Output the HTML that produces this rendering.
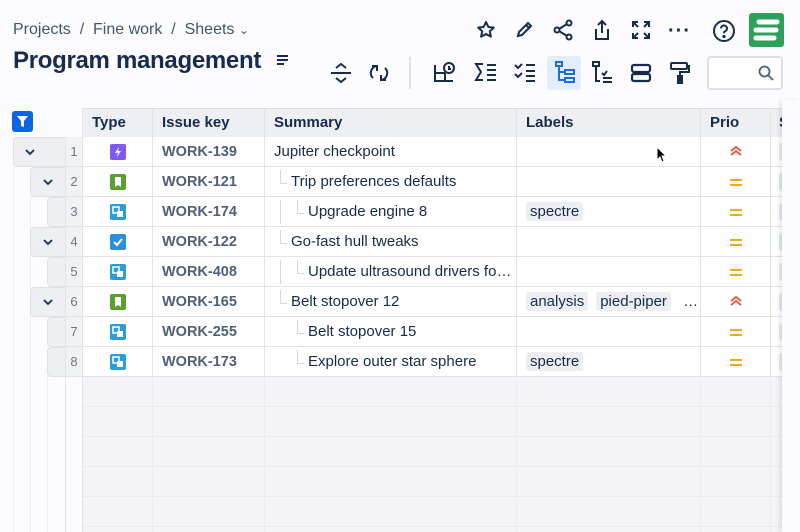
<!DOCTYPE html>
<html><head><meta charset="utf-8"><style>
*{box-sizing:border-box;margin:0;padding:0}
body{width:800px;height:532px;overflow:hidden;background:#fcfcfe;font-family:"Liberation Sans",sans-serif;color:#172b4d;position:relative}
.abs{position:absolute}
.crumb{left:13px;top:21px;font-size:16px;color:#44546f}
h1{position:absolute;left:13px;top:47px;font-size:24px;font-weight:bold;color:#172b4d;letter-spacing:-0.3px}
.ic{position:absolute}
.grid{position:absolute;left:82px;top:108px;width:702px}
.row{position:absolute;left:0;height:30px;border-bottom:1px solid #e2e3e7;background:#fff;width:702px}
.c{position:absolute;top:0;height:30px;line-height:30px;font-size:15px;border-left:1px solid #e2e3e7;white-space:nowrap;overflow:hidden}
.hdr{background:#eeeff2;font-weight:bold;color:#172b4d;border-top:1px solid #dcdde1}
.key{color:#505f79;font-weight:bold;padding-left:9px;font-size:14.5px}
.tag{display:inline-block;background:#eceef1;border-radius:3px;padding:0 4px;line-height:19px;font-size:15px;color:#172b4d;margin-left:8px}
.exp{position:absolute;height:30px;background:#eeeff2;border:1px solid #dfe1e5;border-right:none;border-radius:4px 0 0 4px}
.num{position:absolute;left:65px;width:17px;height:30px;line-height:30px;text-align:center;font-size:13px;color:#6b778c;background:#f1f2f4;border-bottom:1px solid #e2e3e7;border-left:1px solid #e2e3e7}
.tline{position:absolute;border-left:1px solid #d4d6db}
</style></head><body>
<div class="abs crumb">Projects&nbsp;&nbsp;/&nbsp;&nbsp;Fine work&nbsp;&nbsp;/&nbsp;&nbsp;Sheets <span style="font-size:12px">&#8964;</span></div>
<h1>Program management</h1>
<svg class="ic" style="left:276px;top:54px" width="14" height="12"><path d="M1 2h11M1 6h11M1 10h7" stroke="#172b4d" stroke-width="2"/></svg>
<svg class="ic" style="left:476px;top:20px" width="20" height="20" fill="none" stroke="#172b4d" stroke-width="2" stroke-linejoin="round"><path d="M10 2l2.4 5 5.4.6-4 3.7 1.1 5.3L10 14l-4.9 2.6 1.1-5.3-4-3.7 5.4-.6z"/></svg>
<svg class="ic" style="left:514px;top:20px" width="20" height="20" fill="none" stroke="#172b4d" stroke-width="2"><path d="M4 16l1-4 9-9 3 3-9 9z M12 5l3 3"/></svg>
<svg class="ic" style="left:552px;top:19px" width="22" height="22" fill="none" stroke="#172b4d" stroke-width="2"><circle cx="5" cy="11" r="2.5"/><circle cx="17" cy="4" r="2.5"/><circle cx="17" cy="18" r="2.5"/><path d="M7 10l8-5M7 12l8 5"/></svg>
<svg class="ic" style="left:592px;top:19px" width="20" height="22" fill="none" stroke="#172b4d" stroke-width="2"><path d="M10 14V2M6 6l4-4 4 4M4 10v10h12V10"/></svg>
<svg class="ic" style="left:631px;top:20px" width="20" height="20" fill="none" stroke="#172b4d" stroke-width="2"><path d="M2 7V2h5M13 2h5v5M18 13v5h-5M7 18H2v-5M3 3l4 4M17 3l-4 4M17 17l-4-4M3 17l4-4"/></svg>
<div class="abs" style="left:668px;top:23px;font-size:20px;font-weight:bold;letter-spacing:1px;line-height:16px">&middot;&middot;&middot;</div>
<svg class="ic" style="left:712px;top:19px" width="24" height="24" fill="none" stroke="#172b4d" stroke-width="2"><circle cx="12" cy="12" r="10"/><path d="M9 9.5a3 3 0 1 1 4 2.8c-.8.4-1 1-1 2"/><circle cx="12" cy="17.5" r=".6" fill="#172b4d"/></svg>
<div class="abs" style="left:749px;top:13px;width:35px;height:34px;background:#2fa05c;border-radius:3px"></div>
<svg class="ic" style="left:751px;top:16px" width="31" height="28"><path d="M8 6h18M5 14h20M5 22h18" stroke="#fff" stroke-width="5" stroke-linecap="round"/></svg>
<svg class="ic" style="left:330px;top:62px" width="22" height="22" fill="none" stroke="#172b4d" stroke-width="2"><path d="M1 11h20M6 6l5-4 5 4M6 16l5 4 5-4"/></svg>
<svg class="ic" style="left:369px;top:62px" width="20" height="22" fill="none" stroke="#172b4d" stroke-width="2"><path d="M8 4a7 7 0 0 0-4 12M12 18a7 7 0 0 0 4-12M3 4h5v5M17 18h-5v-5"/></svg>
<div class="abs" style="left:409px;top:57px;width:2px;height:32px;background:#e0e1e5"></div>
<svg class="ic" style="left:433px;top:61px" width="24" height="22" fill="none" stroke="#172b4d" stroke-width="2"><path d="M2 4v16h18M2 12h10M12 12v8"/><circle cx="16" cy="7" r="5"/><path d="M16 5v3h2"/></svg>
<svg class="ic" style="left:474px;top:62px" width="24" height="20" fill="none" stroke="#172b4d" stroke-width="2"><path d="M9 2H2l5 8-5 8h7M13 3h9M13 8h9M13 13h9M13 18h9"/></svg>
<svg class="ic" style="left:513px;top:62px" width="24" height="20" fill="none" stroke="#172b4d" stroke-width="2"><path d="M2 3l3 3 4-4M2 12l3 3 4-4M13 3h9M13 9h9M13 14h9M13 19h9"/></svg>
<div class="abs" style="left:547px;top:56px;width:34px;height:34px;background:#e3edfc;border-radius:3px"></div>
<svg class="ic" style="left:554px;top:61px" width="22" height="24" fill="none" stroke="#1d6ce0" stroke-width="2"><rect x="2" y="1" width="6" height="4"/><path d="M5 5v14h5M5 11h5"/><rect x="11" y="9" width="9" height="4"/><rect x="11" y="17" width="9" height="4"/></svg>
<svg class="ic" style="left:591px;top:61px" width="22" height="24" fill="none" stroke="#172b4d" stroke-width="2"><rect x="2" y="1" width="6" height="4"/><path d="M5 5v15h4M11 12l2 2 3-4M12 17h9M12 21h9"/></svg>
<svg class="ic" style="left:630px;top:63px" width="22" height="20" fill="none" stroke="#172b4d" stroke-width="2.2"><rect x="2" y="2" width="18" height="7" rx="2"/><rect x="2" y="11" width="18" height="7" rx="2"/></svg>
<svg class="ic" style="left:669px;top:61px" width="22" height="24" fill="none" stroke="#172b4d" stroke-width="2"><rect x="2" y="2" width="16" height="6" rx="1"/><path d="M18 5h2v6h-9v4"/><rect x="9" y="15" width="4" height="7" fill="#172b4d"/></svg>
<div class="abs" style="left:707px;top:56px;width:76px;height:34px;border:2px solid #dcdfe4;border-radius:4px;background:#fff"></div>
<svg class="ic" style="left:758px;top:65px" width="16" height="16" fill="none" stroke="#505f79" stroke-width="1.8"><circle cx="6.5" cy="6.5" r="5"/><path d="M10 10l5 5"/></svg>
<div class="abs" style="left:12px;top:111px;width:21px;height:21px;background:#0c66e4;border-radius:3px"></div>
<svg class="ic" style="left:15px;top:114px" width="15" height="15"><path d="M2 2h11l-4 5v6l-3-1V7z" fill="#fff"/></svg>
<div class="tline" style="left:13px;top:167px;height:365px;border-color:#eceef1"></div>
<div class="tline" style="left:30px;top:197px;height:335px;border-color:#eceef1"></div>
<div class="tline" style="left:47px;top:377px;height:155px;border-color:#eceef1"></div>
<div class="tline" style="left:65px;top:377px;height:155px;border-color:#e2e3e7"></div>
<div class="exp" style="left:13px;top:137px;width:52px"></div>
<div class="exp" style="left:30px;top:167px;width:35px"></div>
<div class="exp" style="left:47px;top:197px;width:18px"></div>
<div class="exp" style="left:30px;top:227px;width:35px"></div>
<div class="exp" style="left:47px;top:257px;width:18px"></div>
<div class="exp" style="left:30px;top:287px;width:35px"></div>
<div class="exp" style="left:47px;top:317px;width:18px"></div>
<div class="exp" style="left:47px;top:347px;width:18px"></div>
<svg class="ic" style="left:25px;top:148px" width="10" height="8"><path d="M1 2l4 4 4-4" stroke="#172b4d" stroke-width="1.8" fill="none"/></svg>
<svg class="ic" style="left:43px;top:178px" width="10" height="8"><path d="M1 2l4 4 4-4" stroke="#172b4d" stroke-width="1.8" fill="none"/></svg>
<svg class="ic" style="left:43px;top:238px" width="10" height="8"><path d="M1 2l4 4 4-4" stroke="#172b4d" stroke-width="1.8" fill="none"/></svg>
<svg class="ic" style="left:43px;top:298px" width="10" height="8"><path d="M1 2l4 4 4-4" stroke="#172b4d" stroke-width="1.8" fill="none"/></svg>
<div class="num" style="top:137px">1</div><div class="num" style="top:167px">2</div><div class="num" style="top:197px">3</div><div class="num" style="top:227px">4</div><div class="num" style="top:257px">5</div><div class="num" style="top:287px">6</div><div class="num" style="top:317px">7</div><div class="num" style="top:347px">8</div>
<div class="abs" style="left:82px;top:377px;width:702px;height:155px;background:#f4f4f6;border-left:1px solid #e2e3e7;
background-image:linear-gradient(#ebebee 1px,transparent 1px);background-size:100% 30px;background-position:0 29px"></div>
<div class="tline" style="left:152px;top:377px;height:155px;border-color:#ebebee"></div>
<div class="tline" style="left:264px;top:377px;height:155px;border-color:#ebebee"></div>
<div class="tline" style="left:516px;top:377px;height:155px;border-color:#ebebee"></div>
<div class="tline" style="left:700px;top:377px;height:155px;border-color:#ebebee"></div>
<div class="tline" style="left:770px;top:377px;height:155px;border-color:#ebebee"></div>
<div class="grid">
 <div class="row" style="top:0;height:29px;background:#eeeff2;border-top:1px solid #dcdde1;border-bottom:1px solid #dcdde1"></div>
 <div class="c hdr" style="left:0;width:70px;padding-left:9px;height:29px;line-height:28px">Type</div>
 <div class="c hdr" style="left:70px;width:112px;padding-left:9px;height:29px;line-height:28px">Issue key</div>
 <div class="c hdr" style="left:182px;width:252px;padding-left:9px;height:29px;line-height:28px">Summary</div>
 <div class="c hdr" style="left:434px;width:184px;padding-left:9px;height:29px;line-height:28px">Labels</div>
 <div class="c hdr" style="left:618px;width:70px;padding-left:9px;height:29px;line-height:28px">Prio</div>
 <div class="c hdr" style="left:688px;width:14px;padding-left:8px;height:29px;line-height:28px">S</div>
</div>
<div id="rows"></div>
<script>
var R=[["#7f5af0","bolt","WORK-139","Jupiter checkpoint",0,[],"hi",0],
["#5aa02c","book","WORK-121","Trip preferences defaults",1,[],"med",1],
["#2d9cdb","sub","WORK-174","Upgrade engine 8",2,["spectre"],"med",1],
["#2d8ee0","chk","WORK-122","Go-fast hull tweaks",1,[],"med",1],
["#2d9cdb","sub","WORK-408","Update ultrasound drivers fo…",2,[],"med",1],
["#5aa02c","book","WORK-165","Belt stopover 12",1,["analysis","pied-piper"],"hi",1],
["#2d9cdb","sub","WORK-255","Belt stopover 15",2,[],"med",0],
["#2d9cdb","sub","WORK-173","Explore outer star sphere",2,["spectre"],"med",0]];
var sc=["#e9ebee","#d3f1dd","#e0e8fb","#d3f1dd","#e9ebee","#e0e8fb","#e9ebee","#e9ebee"];
var h="";
R.forEach(function(r,i){var t=137+i*30;
var icon={bolt:'<path d="M9 3L5 9h3l-1 4 4-6H8z" fill="#fff"/>',book:'<path d="M5 3h6v10l-3-2-3 2z" fill="#fff"/>',sub:'<rect x="3" y="3" width="6" height="6" fill="none" stroke="#fff" stroke-width="1.5"/><rect x="7" y="7" width="6" height="6" fill="#fff"/>',chk:'<path d="M4 8l3 3 5-6" stroke="#fff" stroke-width="2" fill="none"/>'}[r[1]];
h+='<div class="row" style="left:82px;top:'+t+'px"></div>';
h+='<div class="c" style="left:82px;top:'+t+'px;width:70px;height:29px"><svg style="position:absolute;left:27px;top:7px" width="16" height="16"><rect width="16" height="16" rx="2" fill="'+r[0]+'"/>'+icon+'</svg></div>';
h+='<div class="c key" style="left:152px;top:'+t+'px;width:112px">'+r[2]+'</div>';
var pad=r[4]==0?9:(r[4]==1?26:43);
var tree="";
if(r[4]==1)tree+='<div style="position:absolute;left:15px;top:3px;height:14px;border-left:1px solid #d4d6db"></div><div style="position:absolute;left:15px;top:16px;width:7px;border-top:1px solid #d4d6db"></div>';
if(r[4]==2){ if(r[7])tree+='<div style="position:absolute;left:15px;top:3px;height:24px;border-left:1px solid #d4d6db"></div>';
tree+='<div style="position:absolute;left:32px;top:3px;height:14px;border-left:1px solid #d4d6db"></div><div style="position:absolute;left:32px;top:16px;width:7px;border-top:1px solid #d4d6db"></div>';}
h+='<div class="c" style="left:264px;top:'+t+'px;width:252px;padding-left:'+pad+'px">'+tree+r[3]+'</div>';
h+='<div class="c" style="left:516px;top:'+t+'px;width:184px;padding-left:1px">'+r[5].map(function(x){return'<span class="tag">'+x+'</span>'}).join('')+(r[5].length>1?' <span style="margin-left:8px">…</span>':'')+'</div>';
var p=r[6]=="hi"?'<path d="M2 6l5-4 5 4M2 10l5-4 5 4" stroke="#e8553d" stroke-width="1.8" fill="none"/>':'<path d="M1 5h12M1 10h12" stroke="#f5a623" stroke-width="2"/>';
h+='<div class="c" style="left:700px;top:'+t+'px;width:70px"><svg style="position:absolute;left:28px;top:8px" width="14" height="14">'+p+'</svg></div>';
h+='<div class="c" style="left:770px;top:'+t+'px;width:14px"><div style="position:absolute;left:8px;top:6px;width:10px;height:18px;background:'+sc[i]+';border-radius:3px"></div></div>';
});
document.getElementById("rows").innerHTML=h;
</script>
<div class="abs" style="left:782px;top:100px;width:18px;height:432px;background:#fcfcfe;box-shadow:-3px 0 4px rgba(0,0,0,0.08)"></div>
<svg class="ic" style="left:656px;top:146px" width="12" height="18"><path d="M1 1v13l3-3 2 5 2-1-2-5h4z" fill="#000" stroke="#fff" stroke-width="1"/></svg>
</body></html>
